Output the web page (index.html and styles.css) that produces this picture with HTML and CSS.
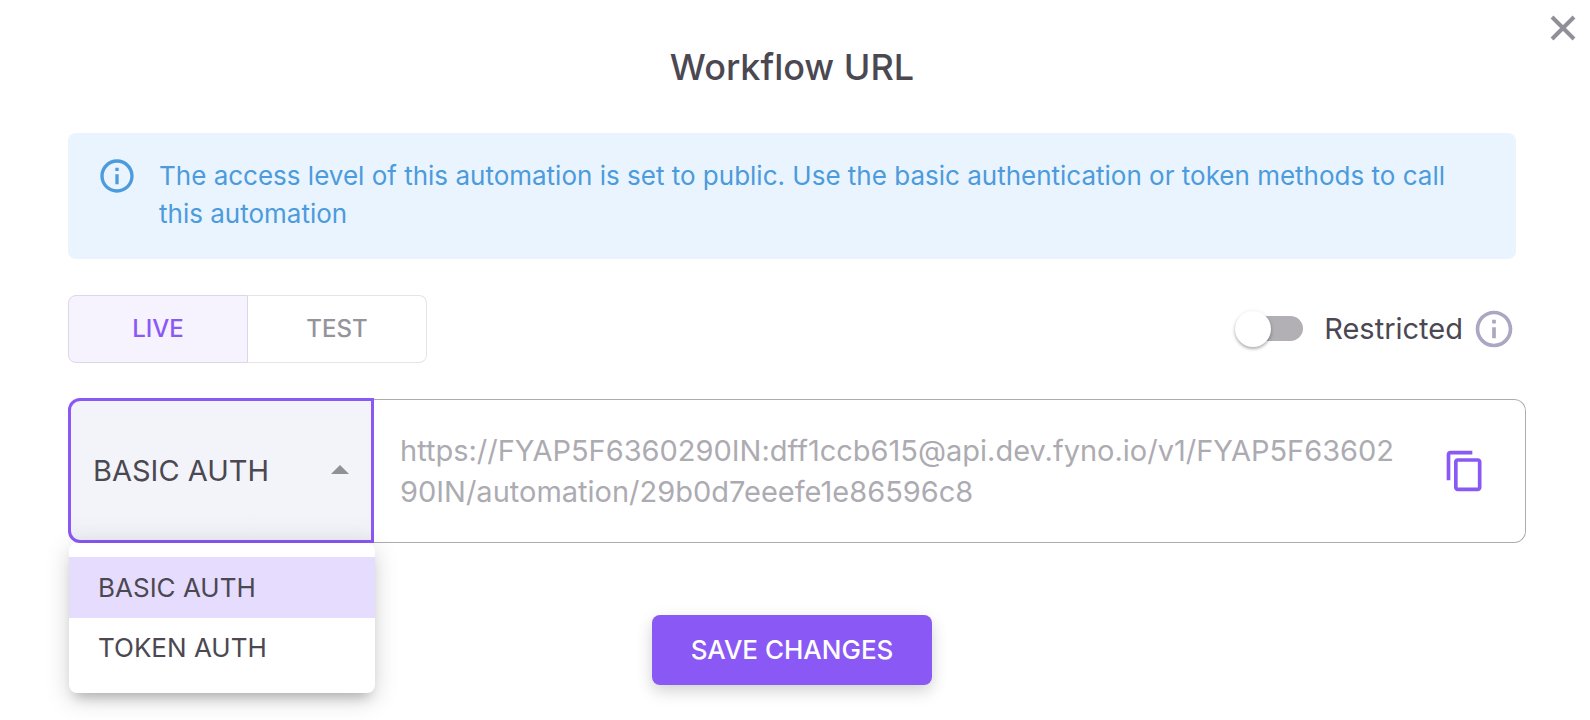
FILE: index.html
```html
<!DOCTYPE html>
<html lang="en">
<head>
<meta charset="utf-8">
<title>Workflow URL</title>
<link rel="stylesheet" href="styles.css">
</head>
<body>
<main class="dialog">
  <button class="close" type="button" aria-label="Close">
    <svg viewBox="0 0 28 28" aria-hidden="true"><path d="M3 3 25 25M25 3 3 25"/></svg>
  </button>
  <h1 class="title">Workflow URL</h1>

  <div class="notice" role="status">
    <svg class="info" viewBox="0 0 24 24" aria-hidden="true"><path d="M11 7h2v2h-2zm0 4h2v6h-2zm1-9C6.480 2 2 6.480 2 12s4.480 10 10 10 10-4.480 10-10S17.520 2 12 2zm0 18c-4.410 0-8-3.590-8-8s3.590-8 8-8 8 3.590 8 8-3.590 8-8 8z"/></svg>
    <p class="notice-text">The access level of this automation is set to public. Use the basic authentication or token methods to call this automation</p>
  </div>

  <div class="options">
    <div class="modes" role="group" aria-label="Environment">
      <button class="mode mode-active" type="button" aria-pressed="true">LIVE</button>
      <button class="mode" type="button" aria-pressed="false">TEST</button>
    </div>
    <div class="access">
      <input class="switch" type="checkbox" role="switch" id="restricted">
      <label class="access-label" for="restricted">Restricted</label>
      <svg class="info info-muted" viewBox="0 0 24 24" aria-hidden="true"><path d="M11 7h2v2h-2zm0 4h2v6h-2zm1-9C6.480 2 2 6.480 2 12s4.480 10 10 10 10-4.480 10-10S17.520 2 12 2zm0 18c-4.410 0-8-3.590-8-8s3.590-8 8-8 8 3.590 8 8-3.590 8-8 8z"/></svg>
    </div>
  </div>

  <div class="endpoint">
    <div class="auth">
      <select class="auth-select" aria-label="Authentication method">
        <option selected>BASIC AUTH</option>
        <option>TOKEN AUTH</option>
      </select>
      <svg class="caret" viewBox="0 0 18 9" aria-hidden="true"><path d="M0 9 9 0l9 9z"/></svg>
      <div class="menu">
        <button class="menu-item menu-item-active" type="button">BASIC AUTH</button>
        <button class="menu-item" type="button">TOKEN AUTH</button>
      </div>
    </div>
    <div class="url">
      <textarea class="url-text" rows="2" readonly aria-label="Workflow URL">https://FYAP5F6360290IN:dff1ccb615@api.dev.fyno.io/v1/FYAP5F6360290IN/automation/29b0d7eeefe1e86596c8</textarea>
      <button class="copy" type="button" aria-label="Copy URL">
        <svg viewBox="0 0 24 24" aria-hidden="true"><path d="M16 1H4c-1.100 0-2 .9-2 2v14h2V3h12V1zm3 4H8c-1.100 0-2 .9-2 2v14c0 1.100.9 2 2 2h11c1.100 0 2-.9 2-2V7c0-1.100-.9-2-2-2zm0 16H8V7h11v14z"/></svg>
      </button>
    </div>
  </div>

  <button class="save" type="button">SAVE CHANGES</button>
</main>
</body>
</html>
```
FILE: styles.css
```css
* { box-sizing: border-box; }

body {
  margin: 0;
  background: #fff;
  color: #4b4852;
  font-family: Inter, "Liberation Sans", sans-serif;
}

button, select, textarea {
  margin: 0;
  padding: 0;
  border: 0;
  background: none;
  color: inherit;
  font: inherit;
}

svg { display: block; fill: currentColor; }

.dialog {
  position: relative;
  display: flex;
  flex-direction: column;
  padding: 45px 74px 35px 68px;
}

.close {
  position: absolute;
  top: 14px;
  right: 13px;
  width: 28px;
  height: 28px;
  color: #918f97;
}

.close svg { stroke: currentColor; stroke-width: 4; }

.title {
  margin: 0 0 44px;
  font-size: 36px;
  line-height: 44px;
  font-weight: 500;
  text-align: center;
}

.notice {
  display: flex;
  gap: 22px;
  min-height: 126px;
  margin-bottom: 36px;
  padding: 24px 28px 24px 29px;
  border-radius: 8px;
  background: #e9f4fe;
  color: #4c9bdc;
}

.info { flex: none; width: 40px; height: 40px; }

.notice .info { margin-top: -1px; }

.notice-text {
  margin: 0;
  font-size: 26px;
  line-height: 38px;
}

.options {
  display: flex;
  justify-content: space-between;
  align-items: center;
  margin-bottom: 35px;
}

.modes {
  display: flex;
  height: 68px;
}

.mode {
  width: 180px;
  padding-bottom: 2px;
  border: 1px solid #e4e3e6;
  border-left: 0;
  border-radius: 0 8px 8px 0;
  color: #95939b;
  font-size: 24px;
  font-weight: 500;
}

.mode-active {
  border: 1px solid #dcd7e8;
  border-radius: 8px 0 0 8px;
  background: #f6f2fe;
  color: #8a58f5;
}

.mode + .mode { width: 179px; }

.access {
  display: flex;
  align-items: center;
}

.switch {
  position: relative;
  width: 68px;
  height: 36px;
  margin: 0 21px 0 0;
  appearance: none;
}

.switch::before {
  content: "";
  position: absolute;
  inset: 5px 0 6px 2px;
  border-radius: 13px;
  background: #b2afb5;
}

.switch::after {
  content: "";
  position: absolute;
  top: 0;
  left: 0;
  width: 36px;
  height: 36px;
  border-radius: 50%;
  background: #fff;
  box-shadow: 0 2px 3px rgba(0, 0, 0, .25), 0 1px 5px rgba(0, 0, 0, .1);
}

.access-label { font-size: 29px; line-height: 40px; }

.info-muted { width: 44px; height: 44px; margin-left: 9px; color: #aca6c2; }

.endpoint {
  display: flex;
  height: 145px;
  margin: 0 -10px 72px 0;
}

.auth {
  position: relative;
  flex: none;
  width: 306px;
}

.auth-select {
  width: 100%;
  height: 100%;
  padding: 0 60px 0 22px;
  border: 3px solid #8a58f5;
  border-radius: 12px 0 0 12px;
  background: linear-gradient(#f3f4fa 80%, #eeeff4);
  font-size: 29px;
  appearance: none;
}

.caret {
  position: absolute;
  top: 67px;
  right: 25px;
  width: 18px;
  height: 9px;
  color: #918f97;
}

.menu {
  position: absolute;
  top: 100%;
  left: 1px;
  display: flex;
  flex-direction: column;
  width: 100%;
  padding: 14px 0 15px;
  border-radius: 8px;
  background: #fff;
  box-shadow: 0 10px 12px -6px rgba(0, 0, 0, .2), 0 6px 24px rgba(0, 0, 0, .18);
}

.menu-item {
  height: 60px;
  padding: 0 29px 1px;
  font-size: 26px;
  text-align: left;
}

.menu-item-active { height: 61px; background: #e6dcfd; }

.url {
  display: flex;
  flex: 1;
  align-items: center;
  gap: 36px;
  margin-top: 1px;
  padding: 0 38px 0 26px;
  border: 1px solid #adabb2;
  border-left: 0;
  border-radius: 0 12px 12px 0;
}

.url-text {
  flex: 1;
  min-width: 0;
  height: 82px;
  overflow: hidden;
  color: #adabb2;
  font-size: 29px;
  line-height: 41px;
  word-break: break-all;
  resize: none;
  outline: 0;
}

.copy { flex: none; width: 44px; height: 44px; color: #8a58f5; }

.save {
  align-self: center;
  width: 280px;
  height: 70px;
  padding-bottom: 2px;
  border-radius: 8px;
  background: #8a58f5;
  color: #fff;
  font-size: 26px;
  font-weight: 500;
  box-shadow: 0 6px 16px rgba(0, 0, 0, .18);
}
```
